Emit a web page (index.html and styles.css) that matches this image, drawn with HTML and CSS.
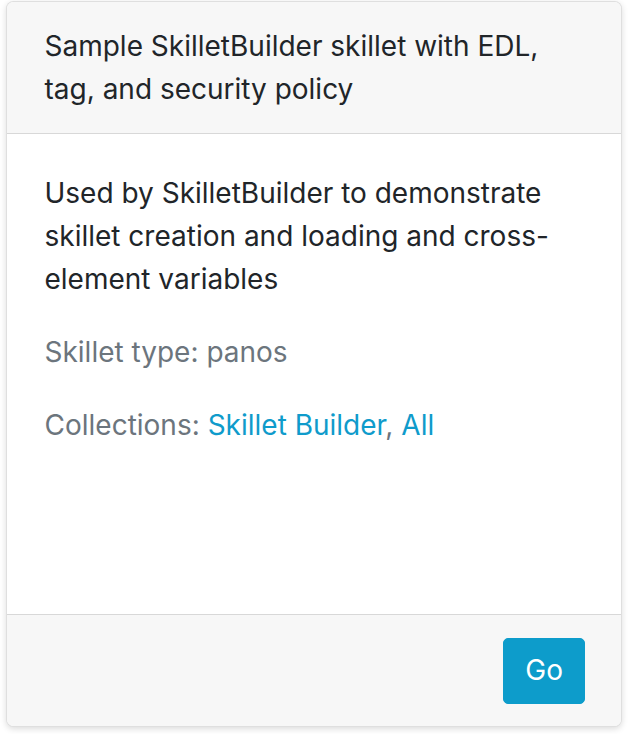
FILE: index.html
```html
<!DOCTYPE html>
<html>
<head>
<meta charset="utf-8">
<link rel="stylesheet" href="styles.css">
</head>
<body>
<div class="card">
  <div class="card-header">Sample SkilletBuilder skillet with EDL, tag, and security policy</div>
  <div class="card-body">
    <p class="card-text">Used by SkilletBuilder to demonstrate skillet creation and loading and cross-element variables</p>
    <p class="muted">Skillet type: panos</p>
    <p class="muted">Collections: <a href="#">Skillet Builder</a>, <a href="#">All</a></p>
  </div>
  <div class="card-footer">
    <a class="btn" href="#">Go</a>
  </div>
</div>
</body>
</html>
```
FILE: styles.css
```css
html, body {
  margin: 0;
  height: 100%;
  background: #ffffff;
}
body {
  box-sizing: border-box;
  padding: 1px 6px 7px 6px;
  font-family: Inter, "Liberation Sans", Arial, sans-serif;
  font-size: 28px;
  line-height: 43px;
  color: #212529;
}
.card {
  box-sizing: border-box;
  height: 100%;
  display: flex;
  flex-direction: column;
  background: #fff;
  border: 1px solid rgba(0,0,0,.125);
  border-radius: 7.5px;
  box-shadow: 0 2px 6px rgba(0,0,0,.14);
  overflow: hidden;
}
.card-header {
  padding: 22.5px 37.5px;
  background: #f7f7f7;
  border-bottom: 1px solid rgba(0,0,0,.125);
}
.card-body {
  flex: 1;
  padding: 37.5px 37.5px;
}
.card-body p {
  margin: 0 0 30px 0;
}
.muted {
  color: #6c757d;
}
.muted a {
  color: #0f9bcb;
  text-decoration: none;
}
.card-footer {
  padding: 22.5px 36px 22.5px 37.5px;
  background: #f7f7f7;
  border-top: 1px solid rgba(0,0,0,.125);
  display: flex;
  justify-content: flex-end;
}
.btn {
  display: inline-block;
  padding: 10.5px 21px;
  background: #0d9ccb;
  border: 1px solid #0d9ccb;
  border-radius: 5px;
  color: #fff;
  text-decoration: none;
}
```
